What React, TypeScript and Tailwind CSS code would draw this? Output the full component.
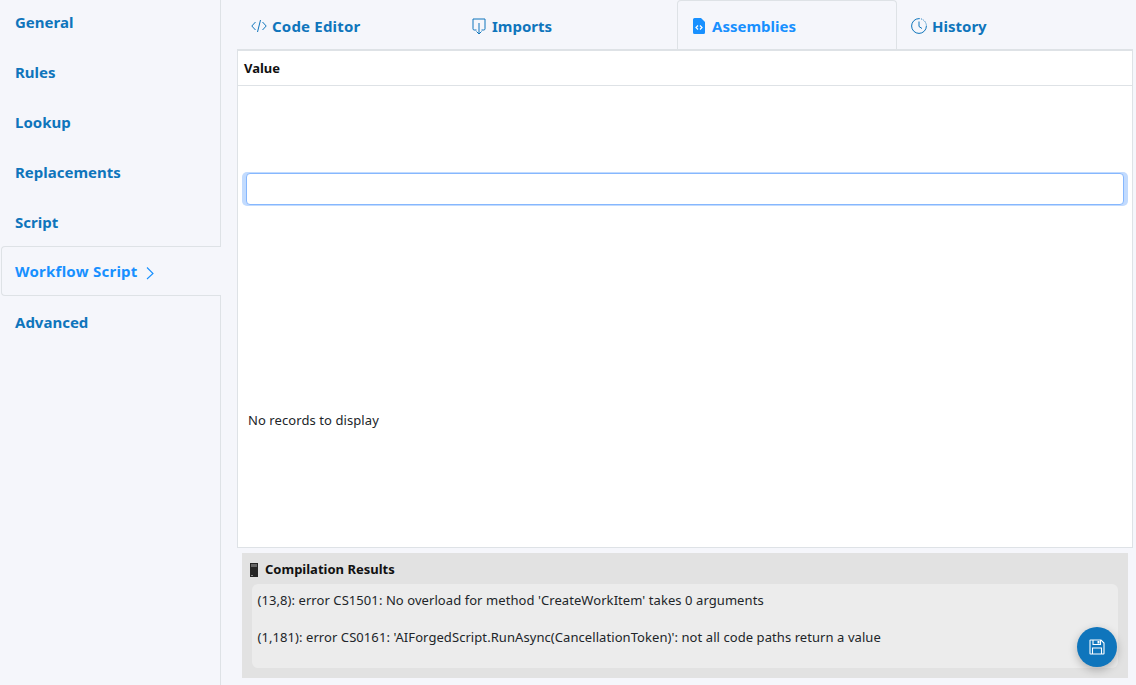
import React from "react";

const font = "font-['Noto_Sans','Open_Sans',sans-serif]";

function SideItem({ label, active }: { label: string; active?: boolean }) {
  if (active) {
    return (
      <div className="ml-px mr-[-1px] flex h-[50px] items-center gap-[7px] rounded-l-[4px] border border-r-0 border-[#dee2e6] bg-[#f5f6fb] pl-[13px] pt-[1px] text-[15px] font-bold tracking-[0.25px] text-[#1890ff]">
        <span>{label}</span>
        <svg width="10" height="14" viewBox="0 0 10 14" fill="none" stroke="#1890ff" strokeWidth="1.100" className="mt-[2px]">
          <path d="M2 1.500 8 7.500 2 13" />
        </svg>
      </div>
    );
  }
  return (
    <div className="flex h-[50px] items-center pl-[15px] pt-[2px] text-[15px] font-bold text-[#0f75bc]">
      {label}
    </div>
  );
}

function CodeIcon() {
  return (
    <svg width="16" height="14" viewBox="0 0 16 14" fill="none" stroke="#0f75bc" strokeWidth="1">
      <path d="M4.500 3 .8 7l3.700 4M11.500 3l3.700 4-3.700 4M9.500 1 6.500 13" />
    </svg>
  );
}
function ImportIcon() {
  return (
    <svg width="14" height="17" viewBox="0 0 14 17" fill="none" stroke="#0f75bc" strokeWidth="1">
      <path d="M4.500 12H2.200A1.200 1.200 0 0 1 1 10.800V1h12v9.800a1.200 1.200 0 0 1-1.200 1.200H9.500M7 5v11M4.500 13.500 7 16l2.500-2.500" />
    </svg>
  );
}
function FileCodeIcon() {
  return (
    <svg width="12" height="16" viewBox="0 0 12 16">
      <path fill="#1890ff" d="M1.500 0H8l4 4v10.500a1.500 1.500 0 0 1-1.500 1.500h-9A1.500 1.500 0 0 1 0 14.500v-13A1.500 1.500 0 0 1 1.500 0Z" />
      <path fill="none" stroke="#fff" strokeWidth="1.200" d="M5 7.500 3 9.500l2 2M7 7.500l2 2-2 2" />
    </svg>
  );
}
function ClockIcon() {
  return (
    <svg width="16" height="16" viewBox="0 0 16 16" fill="none" stroke="#0f75bc" strokeWidth="1">
      <path d="M8 .6A7.400 7.400 0 1 0 15.400 8" />
      <path d="M8 .6A7.400 7.400 0 0 1 15.400 8" strokeDasharray="1 1" />
      <path d="M8 3.500V8.500L11 10.500" />
    </svg>
  );
}
function FloppyIcon() {
  return (
    <svg width="16" height="16" viewBox="0 0 16 16" fill="none" stroke="#fff" strokeWidth="1.100">
      <path d="M1.500 1H12l3 3v10.500a.5.500 0 0 1-.5.500h-13a.5.500 0 0 1-.5-.5v-13a.5.500 0 0 1 .5-.5Z" />
      <path d="M4 1v4.500h7.500V1M3.500 15V9h9v6" />
      <rect x="8.500" y="2" width="2" height="2.500" fill="#fff" stroke="none" />
    </svg>
  );
}

function Tab({ label, icon, active }: { label: string; icon: React.ReactNode; active?: boolean }) {
  return (
    <div
      className={
        active
          ? "mb-[-1px] flex h-[50px] w-[220px] items-center gap-[5px] rounded-t-[4px] border border-b-0 border-[#dee2e6] pl-[13px] pt-[1px] text-[15px] font-bold text-[#1890ff]"
          : "flex h-[49px] w-[220px] items-center gap-[5px] pl-[14px] pt-[3px] text-[15px] font-bold text-[#0f75bc]"
      }
    >
      <span className="flex w-[16px] justify-center">{icon}</span>
      <span className={label === "Code Editor" ? "tracking-[0.2px]" : ""}>{label}</span>
    </div>
  );
}

export default function App() {
  return (
    <div className={`${font} relative flex h-[685px] w-[1136px] overflow-hidden bg-[#f5f6fb] text-[13px] text-[#212529]`}>
      <aside className="w-[221px] shrink-0 border-r border-[#dee2e6]">
        <div className="mt-[-4px]">
          <SideItem label="General" />
          <SideItem label="Rules" />
          <SideItem label="Lookup" />
          <SideItem label="Replacements" />
          <SideItem label="Script" />
          <SideItem label="Workflow Script" active />
          <SideItem label="Advanced" />
        </div>
      </aside>

      <main className="flex min-w-0 flex-1 flex-col pl-[16px] pr-[3px]">
        <div className="flex h-[49px] items-start">
          <Tab label="Code Editor" icon={<CodeIcon />} />
          <Tab label="Imports" icon={<ImportIcon />} />
          <Tab label="Assemblies" icon={<FileCodeIcon />} active />
          <Tab label="History" icon={<ClockIcon />} />
        </div>

        <div className="flex h-[499px] flex-col border border-t-2 border-[#dee2e6] bg-white">
          <div className="flex h-[35px] items-center border-b border-[#dee2e6] pl-[6px] pt-[2px] text-[13px] font-bold text-[#111]">
            Value
          </div>
          <div className="flex flex-1 flex-col px-[8px] pt-[87px]">
            <div className="h-[32px] rounded-[4px] border border-[#86b7fe] bg-white shadow-[-3px_0_0_1px_#c2dbfe,3px_0_0_1px_#c2dbfe]" />
            <div className="mt-[206px] pl-[2px] leading-[18px] tracking-[0.08px]">No records to display</div>
          </div>
        </div>

        <section className="ml-[5px] mr-[5px] mt-[5px] h-[125px] bg-[#e2e2e2] px-[10px]">
          <div className="flex h-[31px] items-center gap-[7px] pt-[3px] text-[13px] font-bold text-[#111]">
            <svg width="8" height="14" viewBox="0 0 8 14" className="ml-[-2px]">
              <rect width="8" height="14" fill="#262626" />
              <rect x="1" y="1" width="6" height="3" fill="#666" />
              <rect x="1" y="12" width="2" height="1" fill="#888" />
            </svg>
            <span>Compilation Results</span>
          </div>
          <div className="h-[84px] rounded-[6px] bg-[#ececec] pl-[5.500px] pr-[5px] pt-[7px] leading-[18px] tracking-[0.07px]">
            <p>(13,8): error CS1501: No overload for method 'CreateWorkItem' takes 0 arguments</p>
            <p className="mt-[19px]">(1,181): error CS0161: 'AIForgedScript.RunAsync(CancellationToken)': not all code paths return a value</p>
          </div>
        </section>
      </main>

      <button className="absolute left-[1077px] top-[627px] flex h-[40px] w-[40px] items-center justify-center rounded-full bg-[#0f75bc] shadow-[0_3px_8px_rgba(0,0,0,0.25)]">
        <FloppyIcon />
      </button>
    </div>
  );
}
